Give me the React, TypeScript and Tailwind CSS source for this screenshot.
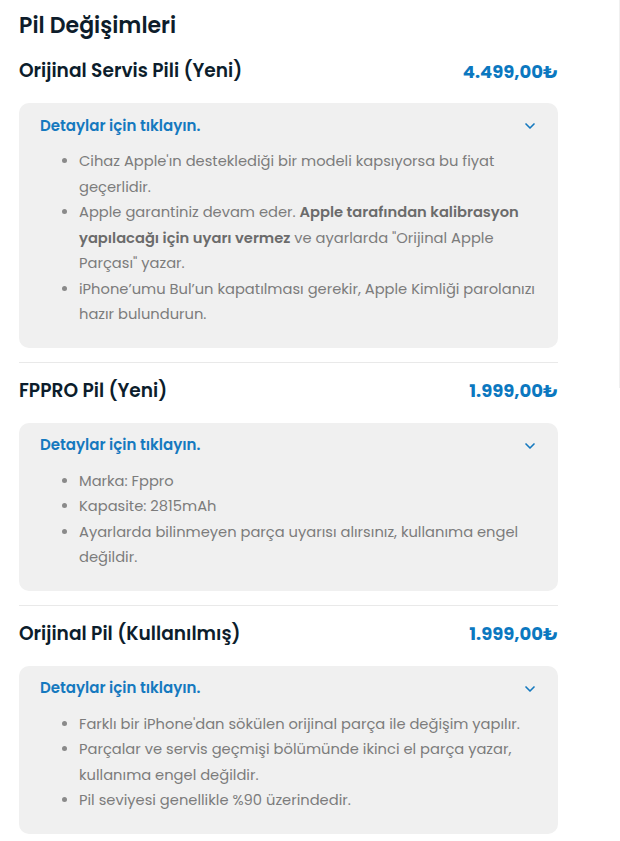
import { ChevronDown } from 'lucide-react';
import type { ReactNode } from 'react';

type Option = {
  name: string;
  price: string;
  details: ReactNode[];
};

const OPTIONS: Option[] = [
  {
    name: 'Orijinal Servis Pili (Yeni)',
    price: '4.499,00₺',
    details: [
      "Cihaz Apple'ın desteklediği bir modeli kapsıyorsa bu fiyat geçerlidir.",
      <>
        Apple garantiniz devam eder.{' '}
        <strong className="font-semibold text-[#6b6b6b]">
          Apple tarafından kalibrasyon yapılacağı için uyarı vermez
        </strong>{' '}
        ve ayarlarda "Orijinal Apple Parçası" yazar.
      </>,
      'iPhone’umu Bul’un kapatılması gerekir, Apple Kimliği parolanızı hazır bulundurun.',
    ],
  },
  {
    name: 'FPPRO Pil (Yeni)',
    price: '1.999,00₺',
    details: [
      'Marka: Fppro',
      'Kapasite: 2815mAh',
      'Ayarlarda bilinmeyen parça uyarısı alırsınız, kullanıma engel değildir.',
    ],
  },
  {
    name: 'Orijinal Pil (Kullanılmış)',
    price: '1.999,00₺',
    details: [
      "Farklı bir iPhone'dan sökülen orijinal parça ile değişim yapılır.",
      'Parçalar ve servis geçmişi bölümünde ikinci el parça yazar, kullanıma engel değildir.',
      'Pil seviyesi genellikle %90 üzerindedir.',
    ],
  },
];

function OptionBlock({ option, last }: { option: Option; last: boolean }) {
  return (
    <div className={last ? 'pt-4' : 'pt-4 pb-[14px] border-b border-[#e9e9e9]'}>
      <div className="flex items-center justify-between h-6 mb-5">
        <h3 className="text-[18.6px] font-semibold text-[#0c1d2c]">{option.name}</h3>
        <span className="text-[18px] font-bold text-[#0b78c0]">{option.price}</span>
      </div>

      {/* Accordion card */}
      <div className="rounded-[10px] bg-[#f0f0f0] pl-[21px] pr-[17px] pt-[13px] pb-5">
        <button className="flex w-full items-center justify-between h-5 pr-[5px] text-[15px] font-semibold text-[#1579bf]">
          <span>Detaylar için tıklayın.</span>
          <ChevronDown size={16} strokeWidth={2.5} className="text-[#1579bf] mr-[-2px]" />
        </button>
        <ul className="mt-[13px] list-disc pl-[39px] text-[14.7px] leading-[25.5px] text-[#7c7c7c] marker:text-[#8a8a8a]">
          {option.details.map((d, i) => (
            <li key={i}>{d}</li>
          ))}
        </ul>
      </div>
    </div>
  );
}

export default function App() {
  return (
    <div className="relative min-h-screen bg-white font-['Poppins','DejaVu_Sans',sans-serif]">
      <div className="w-[539px] ml-[19px] pt-[9px]">
        <h2 className="text-[22px] font-semibold leading-[33px] text-[#0e1d2b]">Pil Değişimleri</h2>
        <div className="mt-[1px]">
          {OPTIONS.map((o, i) => (
            <OptionBlock key={o.name} option={o} last={i === OPTIONS.length - 1} />
          ))}
        </div>
      </div>
      {/* edge of neighbouring panel */}
      <div className="absolute left-[619px] top-0 h-[388px] w-px bg-[#f0f0f0]" />
    </div>
  );
}
